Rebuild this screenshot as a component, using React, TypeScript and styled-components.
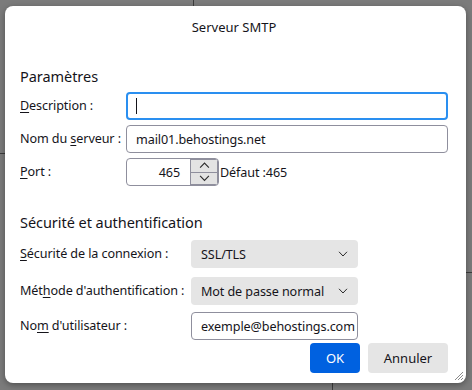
import React from 'react';
import styled, { createGlobalStyle } from 'styled-components';

const GlobalStyle = createGlobalStyle`
  html, body {
    margin: 0;
    padding: 0;
    background: #7b7b7b;
  }
  body {
    font-family: "Noto Sans", "Open Sans", sans-serif;
    color: #15141a;
  }
`;

const Desktop = styled.div`
  position: relative;
  width: 472px;
  height: 390px;
  overflow: hidden;
  box-sizing: border-box;
  padding: 6px 6px 0 5px;
  background: #7b7b7b;
`;

// bits of other windows peeking out behind the dialog
const Seam = styled.div<{ $x: number; $y: number; $w: number; $h: number }>`
  position: absolute;
  left: ${(p) => p.$x}px;
  top: ${(p) => p.$y}px;
  width: ${(p) => p.$w}px;
  height: ${(p) => p.$h}px;
  background: #3c3c3c;
`;

const Dialog = styled.div`
  position: relative;
  width: 461px;
  height: 377px;
  box-sizing: border-box;
  padding: 0 18px 0 15px;
  background: #fff;
  border-radius: 8px;
  box-shadow: 0 2px 6px rgba(0, 0, 0, 0.35);
  display: flex;
  flex-direction: column;
  font-size: 12.6px;
  letter-spacing: -0.1px;
`;

const Title = styled.div`
  padding-top: 12px;
  line-height: 18px;
  font-size: 13px;
  letter-spacing: 0;
  text-align: center;
`;

const SectionHeading = styled.div<{ $gap: number }>`
  margin-top: ${(p) => p.$gap}px;
  font-size: 14.5px;
  letter-spacing: -0.05px;
  line-height: 20px;
`;

const FormGrid = styled.div<{ $labelWidth: number; $top: number; $fieldWidth?: number }>`
  margin-top: ${(p) => p.$top}px;
  display: grid;
  grid-template-columns: ${(p) => p.$labelWidth}px ${(p) => (p.$fieldWidth ? `${p.$fieldWidth}px` : '1fr')};
  align-items: center;
  row-gap: 5px;
`;

const Label = styled.div<{ $space?: number }>`
  line-height: 18px;
  white-space: nowrap;
  margin-top: ${(p) => p.$space ?? 0}px;
  u {
    text-decoration: underline;
    text-underline-offset: 2px;
  }
`;

const TextBox = styled.div<{ $focused?: boolean; $space?: number }>`
  height: 28px;
  box-sizing: border-box;
  margin-top: ${(p) => p.$space ?? 0}px;
  display: flex;
  align-items: center;
  padding: 0 2px 0 ${(p) => (p.$focused ? 8 : 9)}px;
  border: ${(p) => (p.$focused ? '2px solid #2a8ff0' : '1px solid #8f8f9d')};
  border-radius: 4px;
  background: #fff;
  white-space: nowrap;
  overflow: hidden;
`;

const Caret = styled.span`
  width: 1px;
  height: 16px;
  background: #15141a;
`;

const PortRow = styled.div`
  display: flex;
  align-items: center;
`;

const NumberBox = styled.div`
  width: 93px;
  height: 28px;
  box-sizing: border-box;
  display: flex;
  border: 1px solid #8f8f9d;
  border-radius: 4px;
  overflow: hidden;
`;

const NumberValue = styled.div`
  flex: 1;
  display: flex;
  align-items: center;
  justify-content: flex-end;
  padding-right: 10px;
`;

const Spinner = styled.div`
  width: 28px;
  display: flex;
  flex-direction: column;
`;

const SpinButton = styled.div`
  flex: 1;
  display: flex;
  align-items: center;
  justify-content: center;
  background: #e3e3e3;
  border: 1px solid #8f8f9d;
  &:first-child {
    border-bottom-width: 0;
  }
`;

const Hint = styled.span`
  margin-left: 1px;
`;

const Select = styled.div<{ $space?: number }>`
  height: 28px;
  box-sizing: border-box;
  margin-top: ${(p) => p.$space ?? 0}px;
  display: flex;
  align-items: center;
  justify-content: space-between;
  padding: 0 10px 0 10px;
  background: #e5e5e5;
  border-radius: 4px;
  white-space: nowrap;
`;

const Buttons = styled.div`
  margin-top: 3px;
  display: flex;
  justify-content: flex-end;
  gap: 8px;
`;

const Button = styled.div<{ $primary?: boolean; $width: number }>`
  width: ${(p) => p.$width}px;
  height: 30px;
  display: flex;
  align-items: center;
  justify-content: center;
  border-radius: 4px;
  background: ${(p) => (p.$primary ? '#0061e0' : '#e5e5e5')};
  color: ${(p) => (p.$primary ? '#fff' : '#15141a')};
  font-size: 13px;
  letter-spacing: 0;
`;

const Grip = styled.svg`
  position: absolute;
  right: 2px;
  bottom: 2px;
`;

const Chevron = ({ up = false, size = 10 }: { up?: boolean; size?: number }) => (
  <svg width={size} height={size * 0.6} viewBox="0 0 10 6">
    <path
      d={up ? 'M1 5.2 L5 1 L9 5.2' : 'M1 0.8 L5 5 L9 0.8'}
      fill="none"
      stroke="#2b2b2b"
      strokeWidth="1"
    />
  </svg>
);

export default function App() {
  return (
    <Desktop>
      <GlobalStyle />
      <Seam $x={193} $y={0} $w={1} $h={6} />
      <Seam $x={332} $y={383} $w={1} $h={7} />
      <Seam $x={0} $y={153} $w={5} $h={1} />
      <Seam $x={466} $y={272} $w={6} $h={1} />
      <Dialog>
        <Title>Serveur SMTP</Title>

        <SectionHeading $gap={30}>Paramètres</SectionHeading>
        <FormGrid $labelWidth={106} $top={6}>
          <Label>
            <u>D</u>escription :
          </Label>
          <TextBox $focused>
            <Caret />
          </TextBox>

          <Label>
            Nom du <u>s</u>erveur :
          </Label>
          <TextBox>mail01.behostings.net</TextBox>

          <Label>
            <u>P</u>ort :
          </Label>
          <PortRow>
            <NumberBox>
              <NumberValue>465</NumberValue>
              <Spinner>
                <SpinButton>
                  <Chevron up size={11} />
                </SpinButton>
                <SpinButton>
                  <Chevron size={11} />
                </SpinButton>
              </Spinner>
            </NumberBox>
            <Hint>Défaut :465</Hint>
          </PortRow>
        </FormGrid>

        <SectionHeading $gap={26}>Sécurité et authentification</SectionHeading>
        <FormGrid $labelWidth={171} $fieldWidth={167} $top={8}>
          <Label>
            <u>S</u>écurité de la connexion :
          </Label>
          <Select>
            SSL/TLS
            <Chevron size={10} />
          </Select>

          <Label $space={4}>
            Mét<u>h</u>ode d'authentification :
          </Label>
          <Select $space={4}>
            Mot de passe normal
            <Chevron size={10} />
          </Select>

          <Label $space={2}>
            No<u>m</u> d'utilisateur :
          </Label>
          <TextBox $space={2}>exemple@behostings.com</TextBox>
        </FormGrid>

        <Buttons>
          <Button $primary $width={50}>
            OK
          </Button>
          <Button $width={80}>Annuler</Button>
        </Buttons>

        <Grip width="12" height="12" viewBox="0 0 12 12">
          <path d="M11 3 L3 11 M11 6 L6 11 M11 9 L9 11" stroke="#8a8a8a" strokeWidth="1" />
        </Grip>
      </Dialog>
    </Desktop>
  );
}
